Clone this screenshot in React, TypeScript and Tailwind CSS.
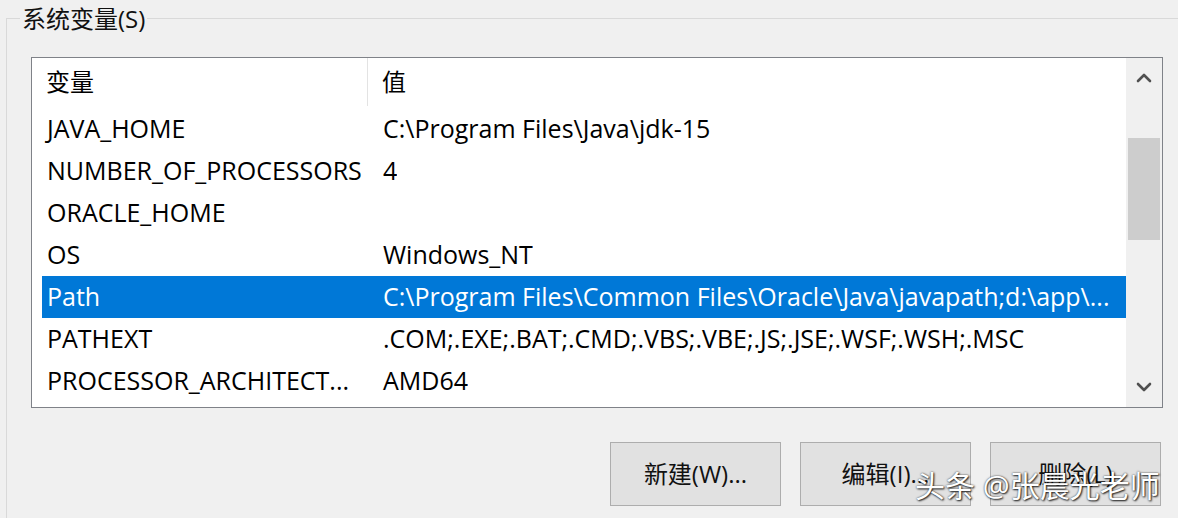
import React from "react";

const rows: { name: string; value: string; selected?: boolean }[] = [
  { name: "JAVA_HOME", value: "C:\\Program Files\\Java\\jdk-15" },
  { name: "NUMBER_OF_PROCESSORS", value: "4" },
  { name: "ORACLE_HOME", value: "" },
  { name: "OS", value: "Windows_NT" },
  {
    name: "Path",
    value: "C:\\Program Files\\Common Files\\Oracle\\Java\\javapath;d:\\app\\...",
    selected: true,
  },
  { name: "PATHEXT", value: ".COM;.EXE;.BAT;.CMD;.VBS;.VBE;.JS;.JSE;.WSF;.WSH;.MSC" },
  { name: "PROCESSOR_ARCHITECT...", value: "AMD64" },
];

function Chevron({ down }: { down?: boolean }) {
  return (
    <svg width="16" height="10" viewBox="0 0 16 10">
      <path
        d={down ? "M2 2 L8 8 L14 2" : "M2 8 L8 2 L14 8"}
        fill="none"
        stroke="#505050"
        strokeWidth="2.6"
        strokeLinecap="round"
        strokeLinejoin="round"
      />
    </svg>
  );
}

export default function App() {
  return (
    <div className="relative w-[1178px] h-[518px] overflow-hidden bg-[#f0f0f0] text-black font-['Open_Sans','Noto_Sans_CJK_SC',sans-serif]">
      <div className="ml-[6px] mt-[18px] h-[500px] border-l border-t border-[#d9d9d9] flex flex-col">
        <div className="-mt-[14px] ml-[13px] w-fit bg-[#f0f0f0] px-[2px] text-[24px] leading-[28px] text-[#111]">
          系统变量(S)
        </div>

        <div className="ml-[24px] mt-[24px] w-[1132px] h-[351px] border border-[#7f8288] bg-white flex">
          <div className="flex-1 flex flex-col pl-[10px]">
            <div className="h-[48px] flex items-stretch text-[24px]">
              <div className="w-[326px] pl-[4px] flex items-center border-r border-[#e3e3e3]">变量</div>
              <div className="pl-[14px] flex items-center">值</div>
            </div>
            <div className="mt-[2px] flex flex-col">
              {rows.map((r) => (
                <div
                  key={r.name}
                  className={
                    r.selected
                      ? "h-[42px] flex items-center text-[25px] whitespace-nowrap bg-[#0078d7] text-white"
                      : "h-[42px] flex items-center text-[25px] whitespace-nowrap"
                  }
                >
                  <div className="w-[326px] pl-[5px] overflow-hidden">{r.name}</div>
                  <div className="pl-[15px] overflow-hidden">{r.value}</div>
                </div>
              ))}
            </div>
          </div>
          <div className="w-[36px] bg-[#f0f0f0] flex flex-col">
            <div className="h-[40px] flex items-center justify-center">
              <Chevron />
            </div>
            <div className="h-[40px]" />
            <div className="mx-[2px] h-[102px] bg-[#cdcdcd]" />
            <div className="flex-1" />
            <div className="h-[40px] flex items-center justify-center">
              <Chevron down />
            </div>
          </div>
        </div>

        <div className="mt-[34px] flex justify-end gap-[19px] pr-[17px]">
          {["新建(W)...", "编辑(I)...", "删除(L)"].map((t) => (
            <div
              key={t}
              className="w-[171px] h-[64px] border border-[#adadad] bg-[#e1e1e1] flex items-center justify-center text-[24px] text-[#111]"
            >
              {t}
            </div>
          ))}
        </div>
      </div>

      <div className="absolute left-[915px] top-[468px] text-[30px] leading-[36px] text-white whitespace-nowrap [text-shadow:1px_1px_2px_rgba(0,0,0,0.85),0_0_2px_rgba(0,0,0,0.7)]">
        头条 @张晨光老师
      </div>
    </div>
  );
}
